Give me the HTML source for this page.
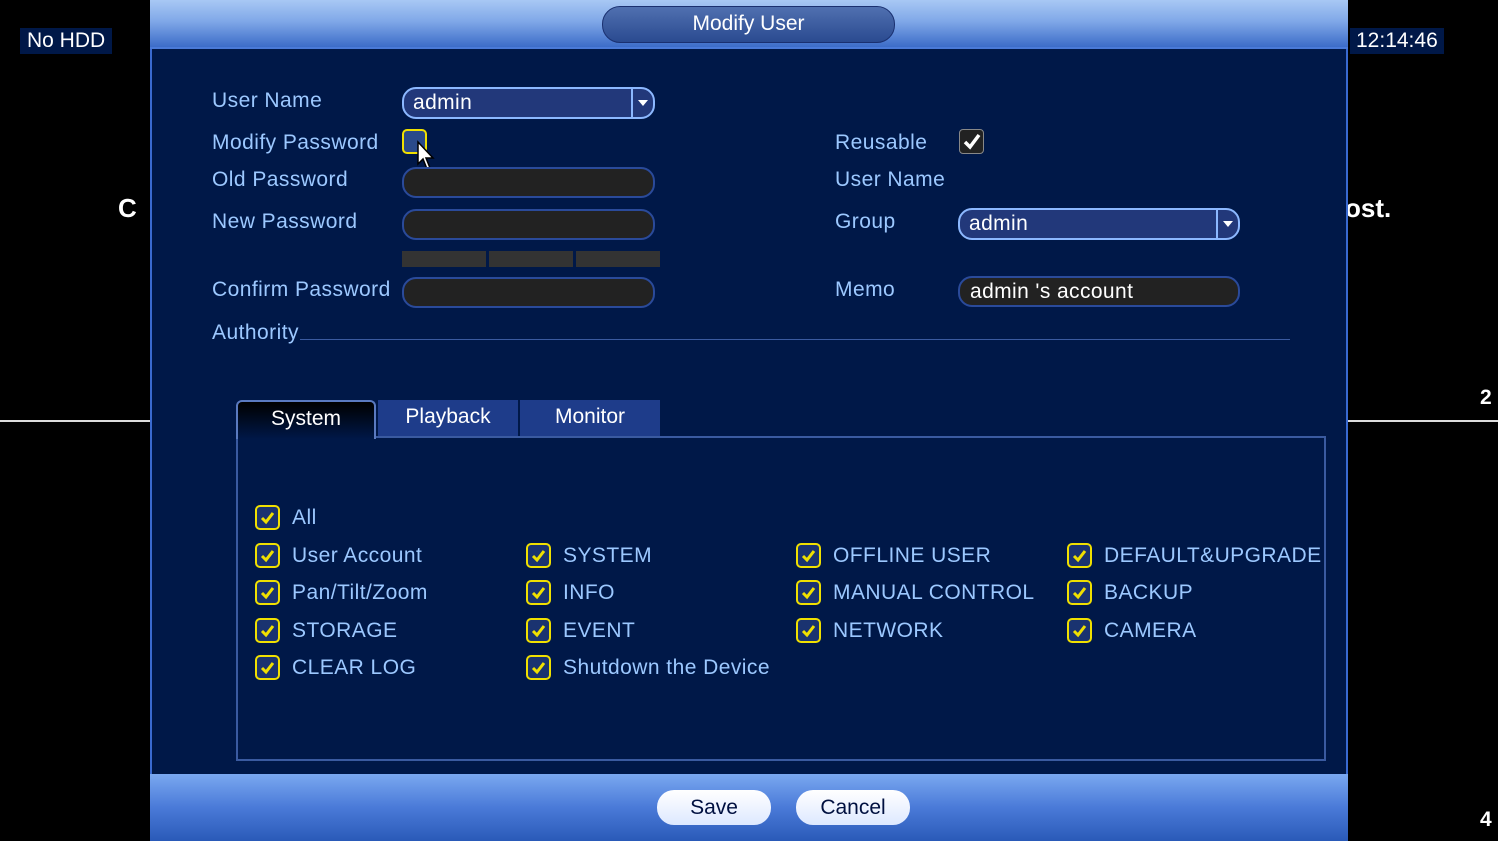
<!DOCTYPE html>
<html><head><meta charset="utf-8"><style>
*{margin:0;padding:0;box-sizing:border-box}
body{width:1498px;height:841px;background:#000;position:relative;overflow:hidden;font-family:"Liberation Sans",sans-serif}
.a{position:absolute}
.lbl{position:absolute;color:#9cc8ff;font-size:21px;line-height:24px;white-space:nowrap;letter-spacing:0.45px}
.inp{position:absolute;height:31px;border:2px solid #2a4a9a;border-radius:14px;background:#222}
.sel{position:absolute;height:32px;border:2px solid #8cb8ff;border-radius:14px;background:#22387a;color:#fff;font-size:21px;line-height:28px;padding-left:9px;letter-spacing:0.4px}
.sel .ar{position:absolute;right:0;top:0;width:22px;height:100%;border-left:2px solid #8cb8ff}
.sel .ar:after{content:"";position:absolute;left:5px;top:11px;border-left:5px solid transparent;border-right:5px solid transparent;border-top:6px solid #fff}
.cb{position:absolute;width:25px;height:25px;border:2px solid #f0e000;border-radius:5px;background:#1a3370}
.cb svg{position:absolute;left:2px;top:2px}
</style></head><body>
<div class="a" style="left:0;top:420px;width:150px;height:2px;background:#ddd"></div>
<div class="a" style="left:1348px;top:420px;width:150px;height:2px;background:#ddd"></div>
<div class="a" style="left:20px;top:28px;background:#001848;color:#fff;font-size:21px;padding:1px 7px">No HDD</div>
<div class="a" style="left:1350px;top:28px;background:#001848;color:#fff;font-size:21px;padding:1px 6px">12:14:46</div>
<div class="a" style="left:118px;top:193px;color:#fff;font-size:26px;font-weight:bold">C</div>
<div class="a" style="left:1345px;top:193px;color:#fff;font-size:26px;font-weight:bold">ost.</div>
<div class="a" style="left:1480px;top:386px;color:#fff;font-size:21px;font-weight:bold">2</div>
<div class="a" style="left:1480px;top:808px;color:#fff;font-size:21px;font-weight:bold">4</div>

<div class="a" style="left:150px;top:0;width:1198px;height:841px;background:#001848;border-left:2px solid #3a6ad0;border-right:2px solid #3a6ad0"></div>
<div class="a" style="left:150px;top:0;width:1198px;height:49px;background:linear-gradient(#a8c8f4 0%,#80a8e8 45%,#3c6cc8 100%);border-bottom:2px solid #4a7ad8"></div>
<div class="a" style="left:602px;top:6px;width:293px;height:37px;border-radius:18px;background:linear-gradient(#5070b0,#2a4a90);border:1px solid #1a3070;color:#fff;font-size:21px;text-align:center;line-height:34px">Modify User</div>
<div class="a" style="left:150px;top:774px;width:1198px;height:67px;background:linear-gradient(#7aa8f0 0%,#4a7ad8 50%,#2a5ab8 100%)"></div>
<div class="a" style="left:657px;top:790px;width:114px;height:35px;border-radius:17px;background:linear-gradient(#fff,#dde8ff);color:#001040;font-size:21px;text-align:center;line-height:35px">Save</div>
<div class="a" style="left:796px;top:790px;width:114px;height:35px;border-radius:17px;background:linear-gradient(#fff,#dde8ff);color:#001040;font-size:21px;text-align:center;line-height:35px">Cancel</div>

<div class="lbl" style="left:212px;top:89px">User Name</div>
<div class="lbl" style="left:212px;top:131px">Modify Password</div>
<div class="lbl" style="left:212px;top:168px">Old Password</div>
<div class="lbl" style="left:212px;top:210px">New Password</div>
<div class="lbl" style="left:212px;top:278px">Confirm Password</div>
<div class="lbl" style="left:212px;top:321px">Authority</div>
<div class="a" style="left:300px;top:339px;width:990px;height:1px;background:#3a5aa0"></div>

<div class="sel" style="left:402px;top:87px;width:253px">admin<div class="ar"></div></div>
<div class="a" style="left:402px;top:129px;width:25px;height:25px;border:2px solid #f0e000;border-radius:5px;background:#2a4a8a"></div>
<svg class="a" style="left:416px;top:140px" width="20" height="32" viewBox="0 0 20 32"><path d="M2 2 L2 24 L7 19 L11 29 L14 28 L10 18 L17 18 Z" fill="#fff" stroke="#000" stroke-width="1.5"/></svg>
<div class="inp" style="left:402px;top:167px;width:253px"></div>
<div class="inp" style="left:402px;top:209px;width:253px"></div>
<div class="a" style="left:402px;top:251px;width:84px;height:16px;background:#333"></div>
<div class="a" style="left:489px;top:251px;width:84px;height:16px;background:#333"></div>
<div class="a" style="left:576px;top:251px;width:84px;height:16px;background:#333"></div>
<div class="inp" style="left:402px;top:277px;width:253px"></div>

<div class="lbl" style="left:835px;top:131px">Reusable</div>
<div class="a" style="left:959px;top:129px;width:25px;height:25px;border-radius:4px;background:#222;border:1px solid #888"><svg width="23" height="23" viewBox="0 0 23 23" style="position:absolute;left:0;top:0"><path d="M5 12 L10 17 L19 5" fill="none" stroke="#fff" stroke-width="3.5"/></svg></div>
<div class="lbl" style="left:835px;top:168px">User Name</div>
<div class="lbl" style="left:835px;top:210px">Group</div>
<div class="sel" style="left:958px;top:208px;width:282px">admin<div class="ar"></div></div>
<div class="lbl" style="left:835px;top:278px">Memo</div>
<div class="inp" style="left:958px;top:276px;width:282px;color:#fff;font-size:21px;line-height:27px;padding-left:10px;letter-spacing:0.4px">admin 's account</div>

<div class="a" style="left:236px;top:436px;width:1090px;height:325px;border:2px solid #3a5aa0"></div>
<div class="a" style="left:236px;top:400px;width:140px;height:39px;background:linear-gradient(#000,#001848);border:2px solid #5a7ac0;border-bottom:none;border-radius:6px 6px 0 0;color:#fff;font-size:21px;text-align:center;line-height:34px">System</div>
<div class="a" style="left:378px;top:400px;width:140px;height:36px;background:#1e3c8a;color:#fff;font-size:21px;text-align:center;line-height:34px">Playback</div>
<div class="a" style="left:520px;top:400px;width:140px;height:36px;background:#1e3c8a;color:#fff;font-size:21px;text-align:center;line-height:34px">Monitor</div>

<div id="cbs"></div>
<script>
var items=[[255,505,"All"],[255,543,"User Account"],[526,543,"SYSTEM"],[796,543,"OFFLINE USER"],[1067,543,"DEFAULT&amp;UPGRADE"],
[255,580,"Pan/Tilt/Zoom"],[526,580,"INFO"],[796,580,"MANUAL CONTROL"],[1067,580,"BACKUP"],
[255,618,"STORAGE"],[526,618,"EVENT"],[796,618,"NETWORK"],[1067,618,"CAMERA"],
[255,655,"CLEAR LOG"],[526,655,"Shutdown the Device"]];
var h="";items.forEach(function(i){h+='<div class="cb" style="left:'+i[0]+'px;top:'+i[1]+'px"><svg width="17" height="17" viewBox="0 0 17 17"><path d="M3 9 L7 13 L14 4" fill="none" stroke="#f0e000" stroke-width="3"/></svg></div><div class="lbl" style="left:'+(i[0]+37)+'px;top:'+(i[1]+1)+'px">'+i[2]+'</div>';});
document.getElementById("cbs").innerHTML=h;
</script>
</body></html>
